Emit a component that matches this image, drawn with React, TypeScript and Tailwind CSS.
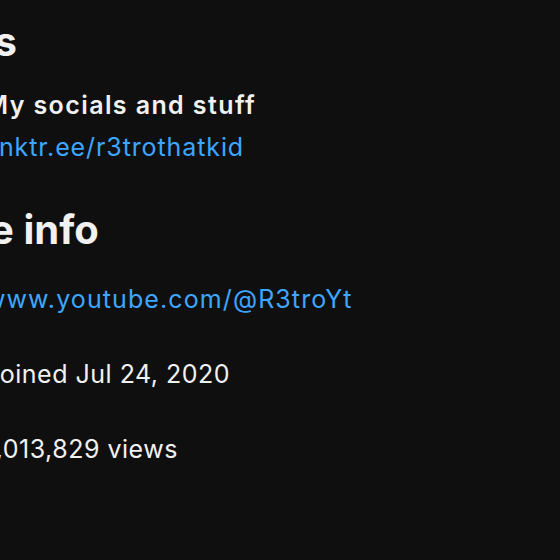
import { Globe, Info, TrendingUp, Link2 } from 'lucide-react'

const AboutPanel = () => {
  return (
    <div className="h-[560px] w-[560px] overflow-hidden bg-[#0f0f0f] text-[#f1f1f1] font-['Inter',sans-serif]">
      <div className="-ml-[75px] pt-[18px]">
        <h2 className="-ml-[12px] text-[40px] leading-[48px] font-bold">Links</h2>

        <div className="mt-[23px] flex gap-[19px]">
          <div className="w-[41px] pt-[10px]">
            <Link2 size={32} />
          </div>
          <div className="flex flex-col gap-[10px]">
            <span className="text-[25px] leading-[32px] font-semibold tracking-[1.4px]">My socials and stuff</span>
            <span className="text-[25px] leading-[32px] tracking-[0.9px] text-[#3ea6ff]">linktr.ee/r3trothatkid</span>
          </div>
        </div>

        <h2 className="-ml-[12px] mt-[43px] text-[40px] leading-[48px] font-bold">More info</h2>

        <div className="mt-[29px] flex flex-col gap-[43px] text-[25px] leading-[32px]">
          <div className="flex items-center gap-[19px]">
            <Globe size={32} className="w-[41px]" />
            <span className="tracking-[1.1px] text-[#3ea6ff]">www.youtube.com/@R3troYt</span>
          </div>
          <div className="flex items-center gap-[19px]">
            <Info size={32} className="w-[41px]" />
            <span className="tracking-[0.5px]">Joined Jul 24, 2020</span>
          </div>
          <div className="flex items-center gap-[19px]">
            <TrendingUp size={32} className="w-[41px]" />
            <span className="tracking-[0.5px]">1,013,829 views</span>
          </div>
        </div>
      </div>
    </div>
  )
}

export default function App() {
  return <AboutPanel />
}
